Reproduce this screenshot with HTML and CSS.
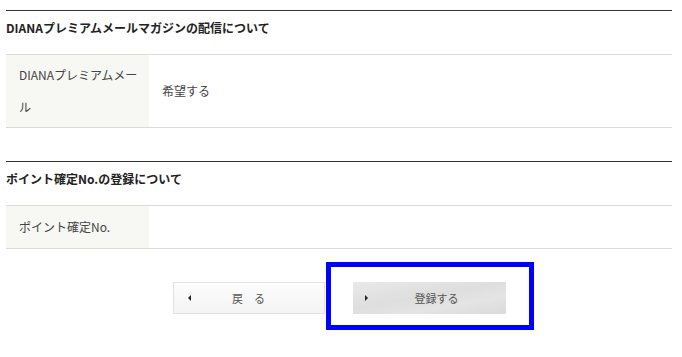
FILE: index.html
```html
<!DOCTYPE html>
<html lang="ja">
<head>
    <meta charset="UTF-8">
    <meta name="viewport" content="width=device-width, initial-scale=1.0">
    <title>会員情報の登録</title>
    <link rel="stylesheet" href="styles.css">
</head>
<body>
    <div class="page">
        <section class="block">
            <h3 class="block-title">DIANAプレミアムメールマガジンの配信について</h3>
            <table class="form-table">
                <tr>
                    <th>DIANAプレミアムメール</th>
                    <td>希望する</td>
                </tr>
            </table>
        </section>

        <section class="block">
            <h3 class="block-title">ポイント確定No.の登録について</h3>
            <table class="form-table">
                <tr class="row-single">
                    <th>ポイント確定No.</th>
                    <td></td>
                </tr>
            </table>
        </section>

        <div class="actions">
            <button class="btn btn-back"><span class="arrow arrow-left"></span><span class="btn-text">戻　る</span></button>
            <div class="highlight">
                <button class="btn btn-submit"><span class="arrow arrow-right"></span><span class="btn-text">登録する</span></button>
                <span class="highlight-frame"></span>
            </div>
        </div>
    </div>
</body>
</html>
```

FILE: styles.css
```css
body {
    margin: 0;
    background: #fff;
    color: #333;
    font-family: "Noto Sans CJK JP", "Noto Sans", sans-serif;
    font-size: 12px;
}
.page {
    padding: 10px 10px 40px 6px;
}
.block {
    margin-bottom: 33px;
}
.block-title {
    margin: 0;
    border-top: 1px solid #333;
    padding: 8px 0 17px;
    font-size: 12px;
    line-height: 18px;
    font-weight: bold;
    color: #222;
}
.form-table {
    width: 100%;
    border-collapse: collapse;
    border-top: 1px solid #dcdcd6;
    border-bottom: 1px solid #dcdcd6;
}
.form-table th,
.form-table td {
    padding: 4px 13px;
    line-height: 32px;
    font-weight: normal;
    text-align: left;
    vertical-align: middle;
    color: #444;
}
.row-single th,
.row-single td {
    padding-top: 5px;
    padding-bottom: 5px;
}
.form-table th {
    width: 124px;
    padding-right: 6px;
    background: #f7f7f3;
}
.actions {
    display: flex;
    align-items: flex-start;
    justify-content: center;
    gap: 28px;
    margin-top: 2px;
}
.btn {
    display: flex;
    align-items: center;
    height: 32px;
    padding: 0;
    border: 0;
    font-family: inherit;
    font-size: 11px;
    color: #555;
    cursor: pointer;
}
.btn-text {
    flex: 1;
    text-align: center;
}
.btn-back {
    width: 152px;
    padding: 0 17px 0 14px;
    border: 1px solid #e2e2e2;
    background: linear-gradient(#fdfdfd, #f3f3f3);
}
.btn-submit {
    width: 153px;
    padding-left: 12px;
    background: linear-gradient(170deg, #e9e9e9, #dedede 45%, #e4e4e4 70%, #dadada);
}
.arrow {
    width: 0;
    height: 0;
    border-top: 3px solid transparent;
    border-bottom: 3px solid transparent;
}
.arrow-left {
    border-right: 3px solid #222;
}
.arrow-right {
    border-left: 3px solid #222;
}
.highlight {
    position: relative;
}
.highlight-frame {
    position: absolute;
    top: -20px;
    bottom: -16px;
    left: -27px;
    right: -28px;
    border: 5px solid #0000ff;
    pointer-events: none;
}
```
